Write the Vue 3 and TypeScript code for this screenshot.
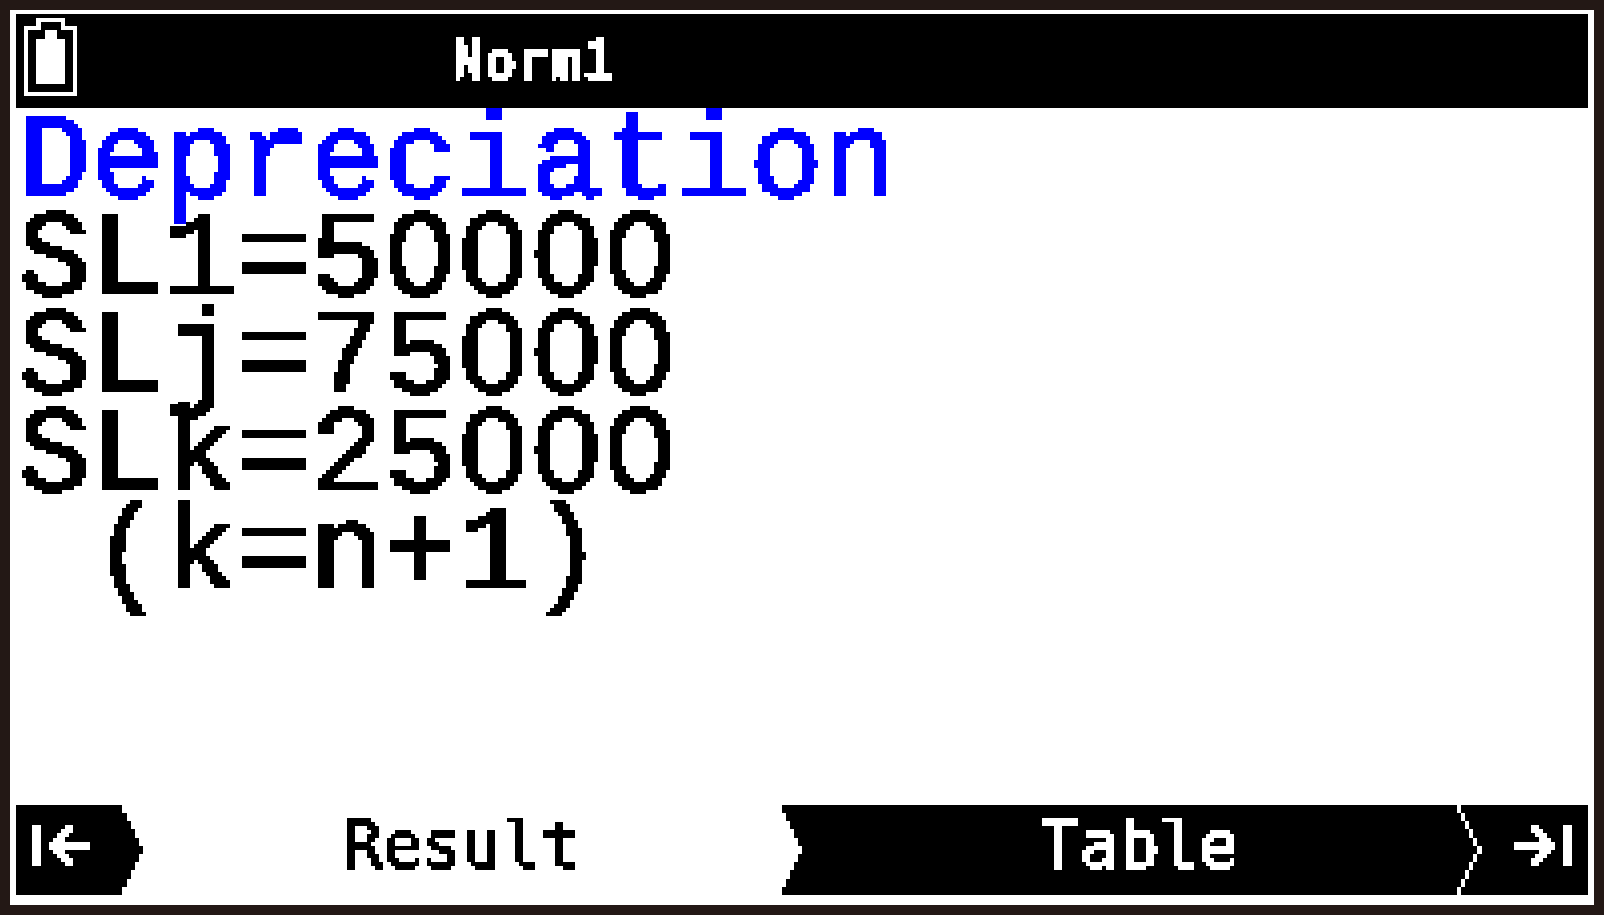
<script setup lang="ts">
interface Row {
  id: string
  text: string
}

const title = 'Depreciation'
const mode = 'Norm1'

const rows: Row[] = [
  { id: 'first', text: 'SL1=50000' },
  { id: 'period', text: 'SLj=75000' },
  { id: 'last', text: 'SLk=25000' },
  { id: 'note', text: ' (k=n+1)' },
]

// Splits a row so that each zero can be drawn without its inner dot.
const pieces = (text: string): string[] => text.split(/(0)/).filter((part) => part !== '')
</script>

<template>
  <div class="device">
    <svg class="defs" width="0" height="0" aria-hidden="true">
      <!-- Samples the text once per 4px cell and fills the cell with that colour. -->
      <filter id="lcd" x="0" y="0" width="1" height="1" color-interpolation-filters="sRGB">
        <feFlood x="2" y="2" width="1" height="1" flood-color="#fff" result="dot" />
        <feOffset in="dot" dx="0" dy="0" x="0" y="0" width="4" height="4" />
        <feTile result="grid" />
        <feComponentTransfer in="SourceGraphic" result="hard">
          <feFuncA type="discrete" tableValues="0 1" />
        </feComponentTransfer>
        <feComposite in="hard" in2="grid" operator="in" />
        <feMorphology operator="dilate" radius="1" result="cell" />
        <feOffset in="cell" dx="-1" dy="0" result="left" />
        <feMerge result="wide">
          <feMergeNode in="cell" />
          <feMergeNode in="left" />
        </feMerge>
        <feOffset in="wide" dx="0" dy="-1" result="up" />
        <feMerge>
          <feMergeNode in="wide" />
          <feMergeNode in="up" />
        </feMerge>
      </filter>
    </svg>

    <div class="screen">
      <header class="status">
        <svg class="battery" width="53" height="78" viewBox="0 0 53 78" shape-rendering="crispEdges" role="img" aria-label="Battery full">
          <path
            fill="#fff"
            fill-rule="evenodd"
            d="M12 0H41V8H53V78H0V8H12ZM17 4V12H4V74H49V12H37V4ZM21 12H33V21H41V66H12V21H21Z"
          />
        </svg>
        <span class="mode">{{ mode }}</span>
      </header>

      <main class="output">
        <h1 class="line title">{{ title }}</h1>
        <p v-for="row in rows" :key="row.id" class="line"><span v-for="(part, i) in pieces(row.text)" :key="i" :class="{ zero: part === '0' }">{{ part }}</span></p>
      </main>

      <nav class="keys" aria-label="Function keys">
        <button class="key" type="button" aria-label="First">
          <svg width="127" height="90" viewBox="0 0 127 90" shape-rendering="crispEdges" aria-hidden="true">
            <path
              fill="#000"
              d="M0 0H106V8H111V16H115V24H119V33H123V41H127V49H123V57H119V65H115V74H111V82H106V90H0Z"
            />
            <path
              fill="#fff"
              d="M16 20H25V61H16ZM49 20H57V28H53V32H49V37H74V45H49V49H53V53H57V61H49V57H45V53H41V49H37V45H33V37H37V33H41V28H45V24H49Z"
            />
          </svg>
        </button>
        <button class="key result" type="button"><span class="label">Result</span></button>
        <button class="key table" type="button">
          <svg class="notch" width="20" height="90" viewBox="0 0 20 90" shape-rendering="crispEdges" aria-hidden="true">
            <path
              fill="#fff"
              d="M0 8H4V16H8V24H12V33H16V41H20V49H16V57H12V65H8V74H4V82H0Z"
            />
          </svg>
          <span class="label">Table</span>
        </button>
        <button class="key" type="button" aria-label="Last">
          <svg width="131" height="90" viewBox="0 0 131 90" shape-rendering="crispEdges" aria-hidden="true">
            <path fill="#000" d="M0 0H131V90H0Z" />
            <path
              fill="#fff"
              d="M0 0H4V8H0ZM4 8H8V16H4ZM8 16H12V24H8ZM12 24H16V33H12ZM16 33H20V41H16ZM20 41H25V49H20ZM16 49H20V57H16ZM12 57H16V65H12ZM8 65H12V74H8ZM4 74H8V82H4ZM0 82H4V90H0Z"
            />
            <path
              fill="#fff"
              d="M115 20H106V61H115ZM82 20H74V28H78V32H82V37H57V45H82V49H78V53H74V61H82V57H86V53H90V49H94V45H98V37H94V33H90V28H86V24H82Z"
            />
          </svg>
        </button>
      </nav>
    </div>
  </div>
</template>

<style>
body {
  margin: 0;
  background: #231815;
}
</style>

<style scoped>
.device {
  box-sizing: border-box;
  display: flex;
  min-height: 100vh;
  padding: 10px;
  background: #231815;
}

.defs {
  position: absolute;
}

.screen {
  box-sizing: border-box;
  display: flex;
  flex: 1;
  flex-direction: column;
  padding: 4px 6px 10px;
  background: #fff;
  color: #000;
}

.status {
  display: grid;
  grid-template-columns: 428px 1fr;
  align-items: center;
  height: 94px;
  padding: 0 8px;
  box-sizing: border-box;
  background: #000;
  color: #fff;
}

.battery {
  display: block;
  margin-bottom: 8px;
}

.mode {
  font: bold 54px/64px "DejaVu Sans Mono", monospace;
  -webkit-text-stroke: 1px currentColor;
  filter: url(#lcd);
}

.output {
  flex: 1;
  padding: 8px 0 0 2px;
}

.line {
  margin: 0;
  font: 122px/98px "Liberation Mono", monospace;
  white-space: pre;
  -webkit-text-stroke: 3px currentColor;
  filter: url(#lcd);
}

.title {
  color: #00f;
}

.zero {
  position: relative;
}

.zero::after {
  content: "";
  position: absolute;
  top: 50%;
  left: 50%;
  width: 24px;
  height: 32px;
  margin: -16px 0 0 -12px;
  background: #fff;
}

.keys {
  display: grid;
  grid-template-columns: 127px 639fr 675fr 131px;
  height: 90px;
}

.key {
  display: flex;
  align-items: center;
  justify-content: center;
  margin: 0;
  padding: 0;
  border: 0;
  background: #fff;
  color: #000;
  cursor: pointer;
}

.key svg {
  display: block;
}

.table {
  justify-content: flex-start;
  background: #000;
  color: #fff;
}

.table .label {
  flex: 1;
  padding-left: 20px;
}

.label {
  padding-bottom: 8px;
  font: 66px/80px "DejaVu Sans Mono", monospace;
  -webkit-text-stroke: 2px currentColor;
  filter: url(#lcd);
}
</style>
